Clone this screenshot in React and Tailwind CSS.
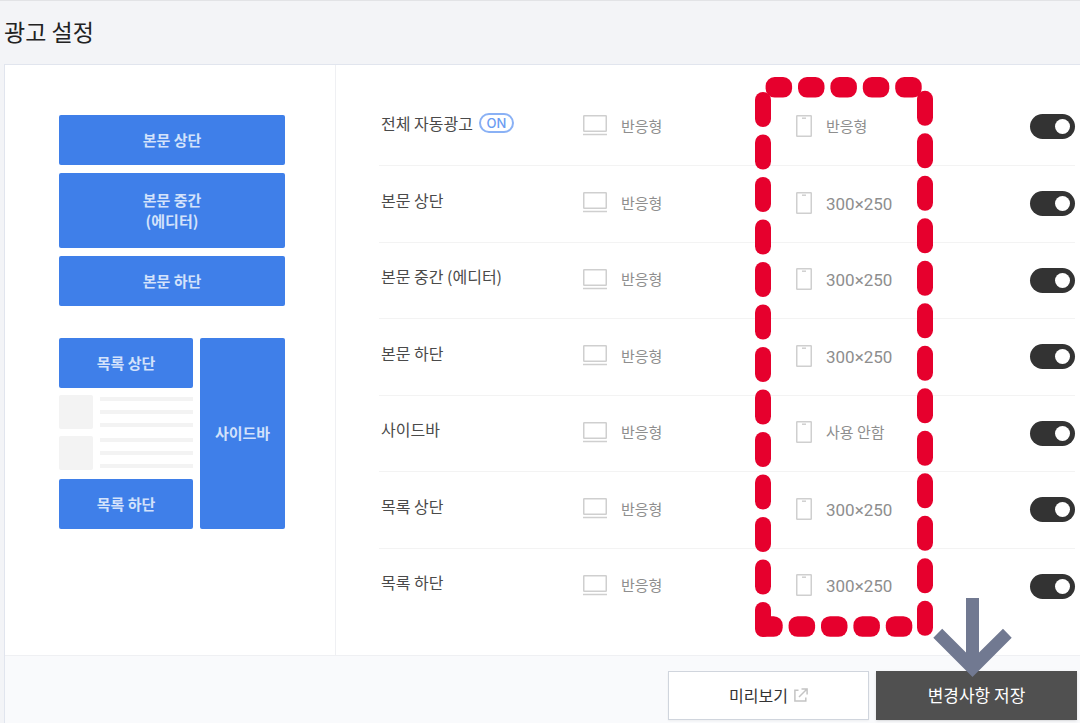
import React, { useState } from 'react';

const initialSlots = [
  { id: 'auto', name: '전체 자동광고', auto: true, pc: '반응형', mobile: '반응형', enabled: true },
  { id: 'body-top', name: '본문 상단', pc: '반응형', mobile: '300×250', enabled: true },
  { id: 'body-middle', name: '본문 중간 (에디터)', pc: '반응형', mobile: '300×250', enabled: true },
  { id: 'body-bottom', name: '본문 하단', pc: '반응형', mobile: '300×250', enabled: true },
  { id: 'sidebar', name: '사이드바', pc: '반응형', mobile: '사용 안함', enabled: true },
  { id: 'list-top', name: '목록 상단', pc: '반응형', mobile: '300×250', enabled: true },
  { id: 'list-bottom', name: '목록 하단', pc: '반응형', mobile: '300×250', enabled: true },
];

const DesktopIcon = () => (
  <svg width="24" height="21" viewBox="0 0 24 21" fill="none" stroke="#cfcfcf" aria-hidden="true">
    <rect x="0.75" y="0.75" width="22.5" height="15.5" rx="0.5" strokeWidth="1.5" />
    <path d="M0 19.5h24" strokeWidth="1.5" />
  </svg>
);

const PhoneIcon = () => (
  <svg width="16" height="22" viewBox="0 0 16 22" fill="none" stroke="#cfcfcf" aria-hidden="true">
    <rect x="0.75" y="0.75" width="14.5" height="20.5" rx="0.5" strokeWidth="1.5" />
    <path d="M6 3.2h4" strokeWidth="1.5" />
  </svg>
);

const ExternalIcon = () => (
  <svg width="14" height="14" viewBox="0 0 14 14" fill="none" stroke="#c4c4c4" strokeWidth="1.5" aria-hidden="true">
    <path d="M4.5 2.2H0.9V13.1H11.8V9.5" />
    <path d="M7.5 0.9h5.6v5.6M13 1L5 9" />
  </svg>
);

// Thick rounded dashes around the mobile column
const DashedFrame = () => (
  <svg width="178" height="560" viewBox="0 0 178 560" fill="#e6002d" className="pointer-events-none absolute left-[419px] top-3" aria-hidden="true">
    {[0, 1, 2, 3, 4].map((n) => (
      <g key={n}>
        <rect x={10.6 + n * 32.4} y="0" width="26.5" height="20.6" rx="9" />
        <rect x={1.2 + n * 32.4} y="539.2" width="26.5" height="20.6" rx="9" />
      </g>
    ))}
    {[0, 1, 2, 3, 4, 5, 6, 7, 8, 9, 10, 11, 12].map((n) => (
      <g key={n}>
        <rect x="0" y={15 + n * 42.5} width="16" height="35" rx="8" />
        <rect x="162" y={13.8 + n * 42.5} width="16" height="35" rx="8" />
      </g>
    ))}
  </svg>
);

const ArrowDown = () => (
  <svg width="79" height="79" viewBox="0 0 79 79" fill="#717991" className="pointer-events-none absolute right-[65px] bottom-[43px]" aria-hidden="true">
    <path d="M33 0h13v54.5L70 30.7l8.7 9L39.5 79 0.3 39.7 9.2 30.7 33 54.5z" />
  </svg>
);

const Block = ({ className = '', children }) => (
  <div className={`flex items-center justify-center rounded-[2px] bg-[#3f7fe9] pb-0.5 text-center text-[15px] leading-[21px] font-bold text-[#d3e2fb] ${className}`}>
    {children}
  </div>
);

const ListItem = () => (
  <div className="flex gap-[7px]">
    <div className="size-[34px] rounded-[2px] bg-[#f3f3f3]" />
    <div className="flex flex-1 flex-col justify-between py-0.5">
      <div className="h-1 bg-[#f3f3f3]" />
      <div className="h-1 bg-[#f3f3f3]" />
      <div className="h-1 bg-[#f3f3f3]" />
    </div>
  </div>
);

const App = () => {
  const [slots, setSlots] = useState(initialSlots);

  const toggleSlot = (id) => {
    setSlots(slots.map((s) => (s.id === id ? { ...s, enabled: !s.enabled } : s)));
  };

  return (
    <div className="min-h-screen overflow-hidden border-t border-[#e2e3e6] bg-[#f3f4f7] pl-1 font-['Noto_Sans_CJK_KR',sans-serif]">
      <h1 className="pt-3.5 pb-[17px] text-[23px] leading-8 text-[#222]">광고 설정</h1>

      <div className="border-t border-l border-[#e1e5ee] bg-white">
        <div className="flex">
          {/* Placement preview */}
          <div className="w-[331px] shrink-0 border-r border-[#eff0f3] pt-[50px] pr-[50px] pl-[54px]">
            <div className="flex flex-col gap-2">
              <Block className="h-[50px]">본문 상단</Block>
              <Block className="h-[75px]">본문 중간<br />(에디터)</Block>
              <Block className="h-[50px]">본문 하단</Block>
            </div>
            <div className="mt-8 flex gap-[7px]">
              <div className="flex flex-1 flex-col gap-[7px]">
                <Block className="h-[50px]">목록 상단</Block>
                <ListItem />
                <ListItem />
                <Block className="mt-0.5 h-[50px]">목록 하단</Block>
              </div>
              <Block className="w-[85px]">사이드바</Block>
            </div>
          </div>

          <div className="relative min-w-0 flex-1 pt-6 pr-[5px] pb-[31px] pl-[43px]">
            <table className="w-full table-fixed border-collapse text-left">
              <colgroup>
                <col className="w-[204px]" />
                <col className="w-[213px]" />
                <col />
                <col className="w-[45px]" />
              </colgroup>
              <tbody>
                {slots.map((slot) => (
                  <tr key={slot.id} className="h-[76px] border-b border-[#f3f3f3] last:border-b-0 even:h-[77px]">
                    <th scope="row" className="pb-2 pl-0.5 font-normal">
                      <label htmlFor={slot.id} className="flex items-center gap-1.5 text-base text-[#4a4a4a]">
                        {slot.name}
                        {slot.auto && (
                          <span className="flex h-5 w-[35px] items-center justify-center rounded-full border-2 border-[#8ab1f5] font-['Inter',sans-serif] text-[13px] leading-4 font-medium text-[#6a9cf2]">ON</span>
                        )}
                      </label>
                    </th>
                    <td>
                      <div className="flex items-center gap-3.5 pb-0.5 text-[15px] leading-6 text-[#8e8e8e]">
                        <DesktopIcon />
                        {slot.pc}
                      </div>
                    </td>
                    <td>
                      <div className="flex items-center gap-3.5 pb-0.5 text-[15px] leading-6 text-[#8e8e8e]">
                        <PhoneIcon />
                        {slot.mobile.includes('×') ? (
                          <span className="pt-0.5 font-['Roboto',sans-serif] text-[17px]">{slot.mobile}</span>
                        ) : (
                          slot.mobile
                        )}
                      </div>
                    </td>
                    <td>
                      <input
                        type="checkbox"
                        role="switch"
                        id={slot.id}
                        checked={slot.enabled}
                        onChange={() => toggleSlot(slot.id)}
                        className="flex h-[25px] w-[45px] cursor-pointer appearance-none items-center rounded-full bg-[#c4c4c4] px-[5px] before:size-[15px] before:rounded-full before:bg-white checked:justify-end checked:bg-[#333]"
                      />
                    </td>
                  </tr>
                ))}
              </tbody>
            </table>
            <DashedFrame />
          </div>
        </div>

        <div className="flex justify-end gap-[7px] border-t border-[#eff0f3] bg-[#f9fafc] pt-[15px] pr-[3px] pb-[3px]">
          <button type="button" className="flex h-[49px] w-[201px] items-center justify-center gap-1.5 border border-[#d0d5dd] bg-white pb-0.5 text-base text-[#333] shadow-xs">
            미리보기
            <ExternalIcon />
          </button>
          <div className="relative">
            <button type="button" className="h-[49px] w-[201px] bg-[#505050] pb-0.5 text-[17px] text-white shadow-sm">
              변경사항 저장
            </button>
            <ArrowDown />
          </div>
        </div>
      </div>
    </div>
  );
};

export default App;
